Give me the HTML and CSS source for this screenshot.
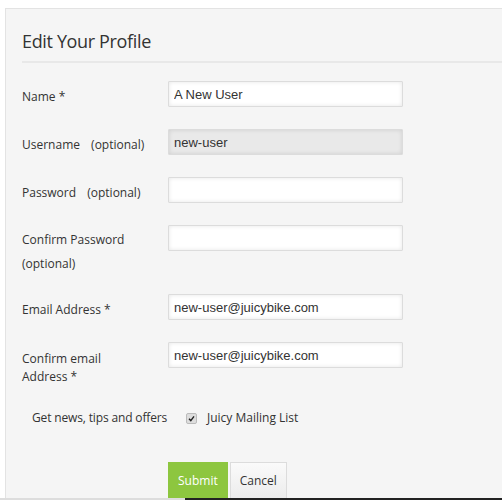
FILE: index.html
```html
<!DOCTYPE html>
<html lang="en">
<head>
  <meta charset="UTF-8" />
  <title>Edit Your Profile</title>
  <link rel="stylesheet" href="styles.css">
</head>
<body>
  <div class="panel">
    <h2 class="title">Edit Your Profile</h2>

    <form class="profile-form">
      <div class="row">
        <label class="field-label">Name *</label>
        <input class="field" type="text" value="A New User" />
      </div>

      <div class="row">
        <label class="field-label">Username <span class="opt">(optional)</span></label>
        <input class="field field-disabled" type="text" value="new-user" readonly />
      </div>

      <div class="row">
        <label class="field-label">Password <span class="opt">(optional)</span></label>
        <input class="field" type="password" />
      </div>

      <div class="row row-tall">
        <label class="field-label field-label-wide">Confirm Password<br>(optional)</label>
        <input class="field" type="password" />
      </div>

      <div class="row">
        <label class="field-label">Email Address *</label>
        <input class="field" type="text" value="new-user@juicybike.com" />
      </div>

      <div class="row row-email">
        <label class="field-label field-label-tight">Confirm email<br>Address *</label>
        <input class="field" type="text" value="new-user@juicybike.com" />
      </div>

      <div class="news-row">
        <span class="news-label">Get news, tips and offers</span>
        <span class="check"><svg width="7" height="7" viewBox="0 0 7 7"><path d="M1 3.8 L2.8 5.6 L6 1.4" fill="none" stroke="#222" stroke-width="1.4"/></svg></span>
        <span class="news-text">Juicy Mailing List</span>
      </div>

      <div class="actions">
        <button type="button" class="btn btn-submit">Submit</button>
        <button type="button" class="btn btn-cancel">Cancel</button>
      </div>
    </form>
  </div>
  <div class="edge"><span class="edge-light"></span><span class="edge-dark"></span></div>
</body>
</html>
```

FILE: styles.css
```css
body {
  margin: 0;
  padding: 8px 0 0 5px;
  background: #fff;
  font-family: 'Open Sans', sans-serif;
  color: #333;
  height: 492px;
  overflow: hidden;
}
.panel {
  background: #f5f5f5;
  border: 1px solid #e3e3e3;
  border-right: none;
  border-bottom: none;
  padding: 0 0 40px 16px;
  height: 100%;
  box-sizing: border-box;
}
.title {
  margin: 0;
  padding: 23px 0 11px 0;
  font-size: 18px;
  font-weight: normal;
  line-height: 18px;
  letter-spacing: -0.35px;
  border-bottom: 2px solid #e8e8e8;
}
.profile-form {
  padding-top: 18px;
}
.row {
  display: flex;
  align-items: flex-start;
  margin-bottom: 21px;
}
.row-tall {
  margin-bottom: 18px;
}
.field-label {
  width: 146px;
  flex: none;
  font-size: 12px;
  line-height: 22px;
  padding-top: 5px;
}
.field-label-wide {
  line-height: 24px;
  padding-top: 3px;
}
.field-label-tight {
  line-height: 18px;
  padding-top: 8px;
}
.opt {
  margin-left: 8px;
}
.field {
  width: 235px;
  height: 26px;
  box-sizing: border-box;
  border: 1px solid #dcdcdc;
  border-radius: 1px;
  background: #fff;
  box-shadow: inset 0 0 4px rgba(0,0,0,0.1);
  padding: 0 5px;
  font-family: 'Liberation Sans', Arial, sans-serif;
  font-size: 13px;
  color: #333;
  outline: none;
}
.field-disabled {
  background: #e9e9e9;
  box-shadow: inset 0 0 4px rgba(0,0,0,0.12);
}
.row-email {
  margin-bottom: 19px;
}
.news-row {
  display: flex;
  align-items: center;
  padding-left: 10px;
  font-size: 12px;
  height: 24px;
}
.news-label {
  width: 154px;
  letter-spacing: -0.15px;
}
.check {
  width: 9px;
  height: 9px;
  border: 1px solid #bbb;
  border-radius: 2px;
  background: #ddd;
  display: inline-flex;
  align-items: center;
  justify-content: center;
  margin-right: 10px;
  margin-top: 3px;
}
.actions {
  display: flex;
  gap: 2px;
  margin-top: 33px;
  padding-left: 146px;
}
.btn {
  height: 38px;
  border-radius: 0;
  font-family: 'Open Sans', sans-serif;
  font-size: 12px;
  padding: 0 9px 2px;
  cursor: pointer;
}
.btn-submit {
  background: #8dc63f;
  border: 1px solid #8dc63f;
  color: #fff;
}
.btn-cancel {
  background: linear-gradient(#fafafa, #ececec);
  border: 1px solid #dcdcdc;
  color: #333;
}
.edge {
  position: fixed;
  left: 0;
  right: 0;
  bottom: 0;
  height: 2px;
  display: flex;
}
.edge-light {
  width: 185px;
  background: #ddd;
}
.edge-dark {
  flex: 1;
  background: #222;
}
```
